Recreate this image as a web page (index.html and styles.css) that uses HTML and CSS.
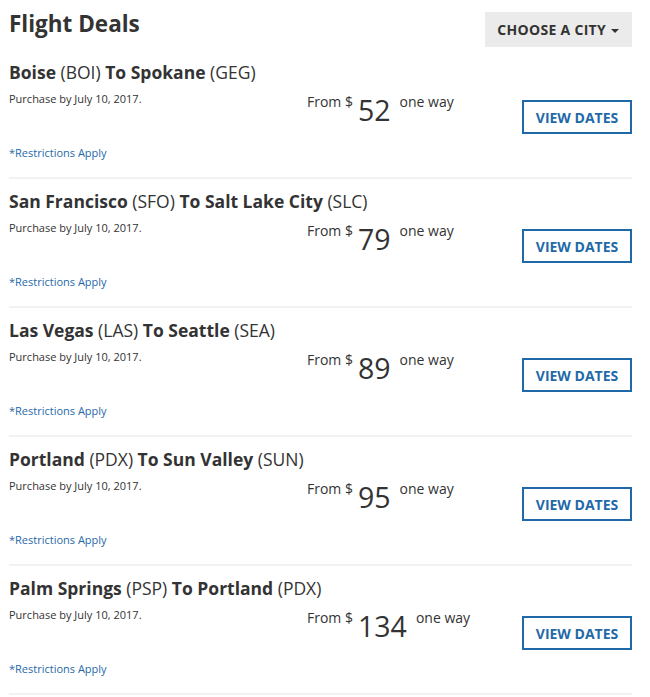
FILE: index.html
```html
<!DOCTYPE html>
<html lang="en">
<head>
    <meta charset="UTF-8">
    <meta name="viewport" content="width=device-width, initial-scale=1.0">
    <title>Flight Deals</title>
    <link rel="stylesheet" href="styles.css">
</head>
<body>
    <div class="deals">
        <div class="deals-header">
            <h1>Flight Deals</h1>
            <button class="city-btn">CHOOSE A CITY <span class="caret"></span></button>
        </div>

        <div class="deal">
            <div class="route"><b>Boise</b> (BOI) <b>To Spokane</b> (GEG)</div>
            <div class="deal-body">
                <div class="info">
                    <div class="purchase">Purchase by July 10, 2017.</div>
                    <a class="restrict" href="#">*Restrictions Apply</a>
                </div>
                <div class="price"><span class="from">From $</span><span class="amount">52</span><span class="way">one way</span></div>
                <button class="view-btn">VIEW DATES</button>
            </div>
        </div>

        <div class="deal">
            <div class="route"><b>San Francisco</b> (SFO) <b>To Salt Lake City</b> (SLC)</div>
            <div class="deal-body">
                <div class="info">
                    <div class="purchase">Purchase by July 10, 2017.</div>
                    <a class="restrict" href="#">*Restrictions Apply</a>
                </div>
                <div class="price"><span class="from">From $</span><span class="amount">79</span><span class="way">one way</span></div>
                <button class="view-btn">VIEW DATES</button>
            </div>
        </div>

        <div class="deal">
            <div class="route"><b>Las Vegas</b> (LAS) <b>To Seattle</b> (SEA)</div>
            <div class="deal-body">
                <div class="info">
                    <div class="purchase">Purchase by July 10, 2017.</div>
                    <a class="restrict" href="#">*Restrictions Apply</a>
                </div>
                <div class="price"><span class="from">From $</span><span class="amount">89</span><span class="way">one way</span></div>
                <button class="view-btn">VIEW DATES</button>
            </div>
        </div>

        <div class="deal">
            <div class="route"><b>Portland</b> (PDX) <b>To Sun Valley</b> (SUN)</div>
            <div class="deal-body">
                <div class="info">
                    <div class="purchase">Purchase by July 10, 2017.</div>
                    <a class="restrict" href="#">*Restrictions Apply</a>
                </div>
                <div class="price"><span class="from">From $</span><span class="amount">95</span><span class="way">one way</span></div>
                <button class="view-btn">VIEW DATES</button>
            </div>
        </div>

        <div class="deal">
            <div class="route"><b>Palm Springs</b> (PSP) <b>To Portland</b> (PDX)</div>
            <div class="deal-body">
                <div class="info">
                    <div class="purchase">Purchase by July 10, 2017.</div>
                    <a class="restrict" href="#">*Restrictions Apply</a>
                </div>
                <div class="price"><span class="from">From $</span><span class="amount">134</span><span class="way">one way</span></div>
                <button class="view-btn">VIEW DATES</button>
            </div>
        </div>
    </div>
</body>
</html>
```

FILE: styles.css
```css
body {
    margin: 0;
    background: #fff;
    color: #333;
    font-family: "Open Sans", "Liberation Sans", sans-serif;
}
.deals {
    width: 623px;
    margin-left: 9px;
}
.deals-header {
    display: flex;
    justify-content: space-between;
    align-items: flex-start;
    padding-top: 12px;
}
h1 {
    margin: 0;
    font-size: 22.5px;
    line-height: 24px;
    font-weight: bold;
}
.city-btn {
    height: 35px;
    padding: 0 13px 0 12px;
    border: none;
    background-color: #ebebeb;
    color: #333;
    font-family: inherit;
    font-size: 14px;
    font-weight: bold;
    letter-spacing: 0.3px;
    cursor: pointer;
}
.caret {
    display: inline-block;
    width: 0;
    height: 0;
    margin-left: 1px;
    vertical-align: middle;
    border-left: 4px solid transparent;
    border-right: 4px solid transparent;
    border-top: 4px solid #333;
}
.deal {
    padding-top: 12px;
    height: 115px;
    border-bottom: 2px solid #f2f2f2;
}
.deals-header + .deal {
    padding-top: 15px;
}
.route {
    font-size: 17.5px;
    line-height: 20px;
}
.route b {
    font-weight: bold;
}
.deal-body {
    display: flex;
    align-items: flex-start;
}
.info {
    width: 298px;
    display: flex;
    flex-direction: column;
}
.purchase {
    font-size: 11px;
    line-height: 14px;
    padding-top: 10px;
}
.restrict {
    margin-top: 40px;
    font-size: 11px;
    line-height: 14px;
    color: #1f69a8;
    text-decoration: none;
}
.price {
    width: 215px;
    padding-top: 10px;
    white-space: nowrap;
}
.from, .way {
    font-size: 14px;
    vertical-align: top;
}
.amount {
    display: inline-block;
    font-size: 28.5px;
    line-height: 30px;
    margin: 3px 9px 0 5px;
    vertical-align: top;
}
.view-btn {
    margin-top: 18px;
    width: 110px;
    height: 34px;
    border: 2px solid #1f69a8;
    background: #fff;
    color: #1f69a8;
    font-family: inherit;
    font-size: 14px;
    font-weight: bold;
    cursor: pointer;
}
```
